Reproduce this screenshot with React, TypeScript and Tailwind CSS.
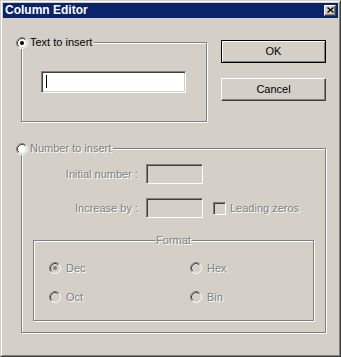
const sunken =
  "border border-t-[#808080] border-l-[#808080] border-b-white border-r-white shadow-[inset_1px_1px_0_#404040,inset_-1px_-1px_0_#d4d0c8]";
const etched = "border border-[#808080] shadow-[1px_1px_0_#fff,inset_1px_1px_0_#fff]";
const dim = "text-[#808080] [text-shadow:1px_1px_0_#fff]";

function Radio({ checked, disabled, white }: { checked?: boolean; disabled?: boolean; white?: boolean }) {
  const fill = white || !disabled ? "#fff" : "#d4d0c8";
  const dot = disabled ? "#808080" : "#000";
  return (
    <svg width="12" height="12" viewBox="0 0 12 12" className="shrink-0">
      <circle cx="6" cy="6" r="5" fill={fill} />
      <path d="M2.11 9.89A5.5 5.5 0 0 1 9.89 2.11" stroke="#808080" fill="none" />
      <path d="M9.89 2.11A5.5 5.5 0 0 1 2.11 9.89" stroke="#fff" fill="none" />
      <path d="M2.82 9.18A4.5 4.5 0 0 1 9.18 2.82" stroke="#404040" fill="none" />
      <path d="M9.18 2.82A4.5 4.5 0 0 1 2.82 9.18" stroke="#d4d0c8" fill="none" />
      {checked && <circle cx="6" cy="6" r="2" fill={dot} />}
    </svg>
  );
}

function Button({ label, isDefault }: { label: string; isDefault?: boolean }) {
  return (
    <div
      className={
        "h-[23px] w-[105px] flex items-center justify-center " +
        (isDefault
          ? "border border-black shadow-[inset_1px_1px_0_#fff,inset_-1px_-1px_0_#808080]"
          : "border border-t-white border-l-white border-b-[#404040] border-r-[#404040] shadow-[inset_-1px_-1px_0_#808080]")
      }
    >
      {label}
    </div>
  );
}

function FormatOption({ label, checked }: { label: string; checked?: boolean }) {
  return (
    <div className="flex items-center gap-[5px] h-[12px]">
      <Radio disabled checked={checked} />
      <span className={dim}>{label}</span>
    </div>
  );
}

export default function App() {
  return (
    <div className="w-[341px] h-[357px] border border-t-[#d4d0c8] border-l-[#d4d0c8] border-b-[#404040] border-r-[#404040] bg-[#d4d0c8] font-['Liberation_Sans',Arial,sans-serif] text-[11px] leading-[13px] text-black">
      <div className="h-full border border-t-white border-l-white border-b-[#808080] border-r-[#808080] p-px flex flex-col">
        {/* caption */}
        <div className="h-[15px] shrink-0 bg-[#0a246a] flex items-center pl-[2px] pr-[2px]">
          <span className="text-white font-bold text-[12px]">Column Editor</span>
          <div className="ml-auto w-[12px] h-[11px] bg-[#d4d0c8] border border-t-white border-l-white border-b-[#404040] border-r-[#404040] shadow-[inset_-1px_-1px_0_#808080] flex items-center justify-center pb-px">
            <svg width="7" height="6" viewBox="0 0 7 6">
              <path d="M0.5 0.5L6.5 5.5M6.5 0.5L0.5 5.5" stroke="#000" strokeWidth="1.4" />
            </svg>
          </div>
        </div>

        <div className="flex-1 pl-[18px]">
          <div className="flex items-start">
            {/* Text to insert */}
            <div className={"relative mt-[24px] w-[186px] h-[80px] " + etched}>
              <div className="absolute -top-[7px] -left-[6px] flex items-center bg-[#d4d0c8] pr-[2px] h-[13px]">
                <Radio checked />
                <span className="ml-[2px]">Text to insert</span>
              </div>
              <div className={"ml-[19px] mt-[28px] w-[145px] h-[22px] bg-white flex items-center pl-[4px] " + sunken}>
                <div className="w-px h-[13px] bg-black -mt-[2px]" />
              </div>
            </div>

            <div className="ml-[14px] mt-[22px] flex flex-col gap-[15px]">
              <Button label="OK" isDefault />
              <Button label="Cancel" />
            </div>
          </div>

          {/* Number to insert */}
          <div className={"relative mt-[26px] w-[305px] h-[185px] " + etched}>
            <div className="absolute -top-[7px] -left-[6px] flex items-center bg-[#d4d0c8] pr-[2px] h-[13px]">
              <Radio white />
              <span className={"ml-[2px] " + dim}>Number to insert</span>
            </div>

            <div className="pt-[15px] flex items-center">
              <span className={"w-[116px] text-right " + dim}>Initial number :</span>
              <div className={"ml-[8px] w-[57px] h-[20px] " + sunken} />
            </div>
            <div className="mt-[14px] flex items-center">
              <span className={"w-[116px] text-right " + dim}>Increase by :</span>
              <div className={"ml-[8px] w-[57px] h-[20px] " + sunken} />
              <div className={"ml-[10px] w-[13px] h-[13px] " + sunken} />
              <span className={"ml-[4px] " + dim}>Leading zeros</span>
            </div>

            {/* Format */}
            <div className={"relative ml-[11px] mt-[22px] w-[281px] h-[81px] " + etched}>
              <div className="absolute -top-[7px] left-1/2 -translate-x-1/2 bg-[#d4d0c8] px-[1px] h-[13px]">
                <span className={dim}>Format</span>
              </div>
              <div className="pt-[21px] pl-[15px] grid grid-cols-[141px_auto] gap-y-[17px]">
                <FormatOption label="Dec" checked />
                <FormatOption label="Hex" />
                <FormatOption label="Oct" />
                <FormatOption label="Bin" />
              </div>
            </div>
          </div>
        </div>
      </div>
    </div>
  );
}
